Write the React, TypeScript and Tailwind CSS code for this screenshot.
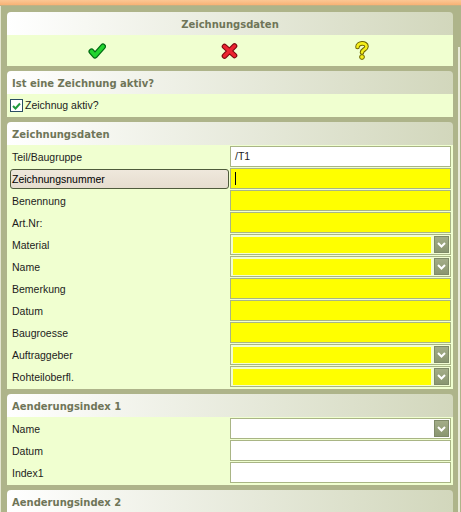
import React from 'react';

const Header: React.FC<{ title: string; center?: boolean }> = ({ title, center }) => (
  <div
    className={`h-[23px] pt-[2px] rounded-t-[4px] bg-gradient-to-r from-white to-[#d2d7bc] flex items-center font-['DejaVu_Sans'] font-bold text-[10px] text-[#6f7558] ${center ? 'justify-center' : 'pl-[5px]'}`}
  >
    {title}
  </div>
);

const TextRow: React.FC<{ label: string; value?: string; yellow?: boolean; focused?: boolean }> = ({ label, value, yellow, focused }) => (
  <div className="h-[22px] flex">
    <div className={`w-[223px] pl-[5px] flex items-center ${focused ? '' : 'pt-[1px]'}`}>{focused ? (
      <div className="w-[219px] h-[20px] -ml-[2px] pl-[1px] pt-[1px] flex items-center rounded-[3px] border border-[#4f5b3c] bg-gradient-to-b from-[#efe8dc] to-[#e6ddcf] text-black">{label}</div>
    ) : label}</div>
    <div className={`w-[221px] h-[21px] border border-[#a9b585] pl-[4px] flex items-center ${yellow ? 'bg-[#ffff00]' : 'bg-white'}`}>
      {focused && <div className="w-px h-[13px] bg-black" />}
      {value}
    </div>
  </div>
);

const SelectRow: React.FC<{ label: string; yellow?: boolean }> = ({ label, yellow }) => (
  <div className="h-[22px] flex">
    <div className="w-[223px] pl-[5px] pt-[1px] flex items-center">{label}</div>
    <div className={`w-[221px] h-[21px] border border-[#a9b585] flex items-center pl-[2px] pr-[1px] ${yellow ? 'bg-[#f2fdd2]' : 'bg-white'}`}>
      <div className={`w-[198px] h-[16px] ${yellow ? 'bg-[#ffff00]' : 'bg-white'}`} />
      <div className="ml-[3px] w-[15px] h-[17px] border border-[#7f8a68] bg-gradient-to-b from-[#a3ad88] to-[#8a9670] flex items-center justify-center">
        <svg width="9" height="6" viewBox="0 0 9 6">
          <path d="M1 1 L4.5 4.5 L8 1" fill="none" stroke="#fff" strokeWidth="2" />
        </svg>
      </div>
    </div>
  </div>
);

const OkIcon = () => (
  <svg width="18" height="16" viewBox="0 0 18 16">
    <path d="M3.5 8.5 L7 12.5 L15 3.5" fill="none" stroke="#006b12" strokeWidth="6" strokeLinecap="round" strokeLinejoin="round" />
    <path d="M3.5 8.5 L7 12.5 L15 3.5" fill="none" stroke="#22d42e" strokeWidth="3.6" strokeLinecap="round" strokeLinejoin="round" />
  </svg>
);

const CancelIcon = () => (
  <svg width="17" height="16" viewBox="0 0 17 16">
    <path d="M3.5 3.5 L13.5 12.5 M13.5 3 L3.5 13" fill="none" stroke="#7d0a10" strokeWidth="5.6" strokeLinecap="round" />
    <path d="M3.5 3.5 L13.5 12.5 M13.5 3 L3.5 13" fill="none" stroke="#ec2430" strokeWidth="3.4" strokeLinecap="round" />
  </svg>
);

const HelpIcon = () => (
  <svg width="14" height="19" viewBox="0 0 14 19">
    <path d="M2.5 6 C2.5 1.5 11.5 1 11.5 5.5 C11.5 8.5 7 8.5 7 11.5" fill="none" stroke="#6c6400" strokeWidth="4.6" strokeLinecap="round" />
    <path d="M2.5 6 C2.5 1.5 11.5 1 11.5 5.5 C11.5 8.5 7 8.5 7 11.5" fill="none" stroke="#f5ee1a" strokeWidth="2.6" strokeLinecap="round" />
    <circle cx="7" cy="16" r="2.4" fill="#f5ee1a" stroke="#6c6400" />
  </svg>
);

const App: React.FC = () => {
  return (
    <div className="w-[461px] h-[512px] overflow-hidden bg-[#aeb48a] font-['Liberation_Sans',sans-serif] text-[10.5px] text-[#1c1c1c]">
      <div className="h-[6px] bg-gradient-to-b from-[#fcc794] to-[#f8b275] border-b border-[#c2b183]" />
      <div className="flex">
        <div className="w-[8px] shrink-0">
          <div className="w-[1px] h-[512px] bg-[#e3e5cf]" />
        </div>
        <div className="w-[446px] -ml-px pt-[6px] flex flex-col gap-[5px]">
          {/* Kopf */}
          <div>
            <Header title="Zeichnungsdaten" center />
            <div className="h-[31px] bg-[#f0ffd0] flex items-center pl-[23px]">
              <div className="w-[133px] flex justify-center"><OkIcon /></div>
              <div className="w-[133px] flex justify-center"><CancelIcon /></div>
              <div className="w-[131px] flex justify-center"><HelpIcon /></div>
            </div>
          </div>

          <div>
            <Header title="Ist eine Zeichnung aktiv?" />
            <div className="h-[23px] bg-[#f0ffd0] flex items-center pl-[3px]">
              <div className="w-[13px] h-[13px] border border-[#2a4d62] bg-white flex items-center justify-center">
                <svg width="9" height="8" viewBox="0 0 9 8">
                  <path d="M1 4 L3.5 6.5 L8 1.5" fill="none" stroke="#1f9a3c" strokeWidth="2" />
                </svg>
              </div>
              <span className="ml-[2px] pt-[1px]">Zeichnug aktiv?</span>
            </div>
          </div>

          <div>
            <Header title="Zeichnungsdaten" />
            <div className="bg-[#f0ffd0] pt-[1px] pb-[1px]">
              <TextRow label="Teil/Baugruppe" value="/T1" />
              <TextRow label="Zeichnungsnummer" yellow focused />
              <TextRow label="Benennung" yellow />
              <TextRow label="Art.Nr:" yellow />
              <SelectRow label="Material" yellow />
              <SelectRow label="Name" yellow />
              <TextRow label="Bemerkung" yellow />
              <TextRow label="Datum" yellow />
              <TextRow label="Baugroesse" yellow />
              <SelectRow label="Auftraggeber" yellow />
              <SelectRow label="Rohteiloberfl." yellow />
            </div>
          </div>

          <div>
            <Header title="Aenderungsindex 1" />
            <div className="bg-[#f0ffd0] pt-[1px] pb-[1px]">
              <SelectRow label="Name" />
              <TextRow label="Datum" />
              <TextRow label="Index1" />
            </div>
          </div>

          <div>
            <Header title="Aenderungsindex 2" />
          </div>
        </div>
        <div className="w-[7px] shrink-0 flex justify-end pt-[41px]">
          <div className="w-[2px] h-[480px] bg-[#e9ebd8]" />
        </div>
      </div>
    </div>
  );
};

export default App;
